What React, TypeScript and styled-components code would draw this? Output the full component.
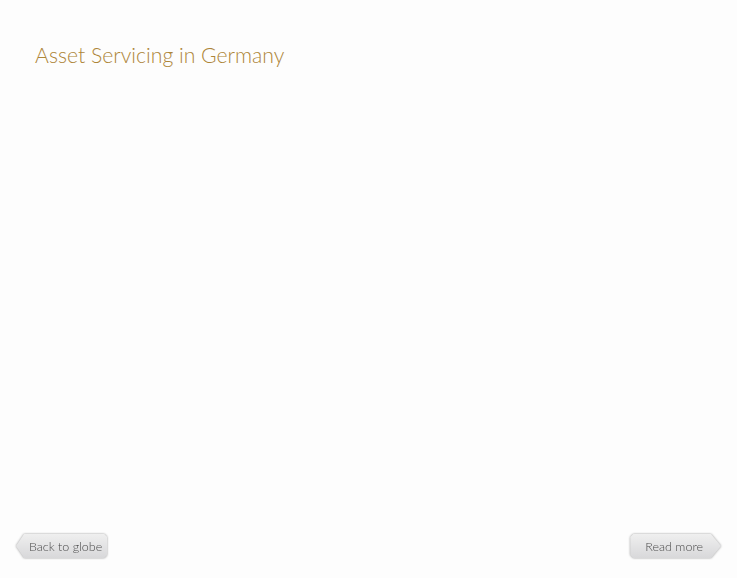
import React from "react";
import styled, { createGlobalStyle } from "styled-components";

const Global = createGlobalStyle`
  html, body { margin: 0; padding: 0; background: #fdfdfd; }
  body { font-family: Lato, "Open Sans", sans-serif; }
`;

const Page = styled.div`
  box-sizing: border-box;
  width: 737px;
  height: 578px;
  display: flex;
  flex-direction: column;
  padding: 42px 16px 20px 35px;
  background: #fdfdfd;
`;

const Title = styled.h1`
  margin: 0;
  font-family: Lato, "Open Sans", sans-serif;
  font-weight: 300;
  font-size: 21.2px;
  line-height: 26px;
  color: #ad8538;
`;

const Stage = styled.div`
  flex: 1;
`;

const Footer = styled.div`
  display: flex;
  justify-content: space-between;
  align-items: center;
  margin-left: -19px;
`;

const Outline = styled.div`
  filter: drop-shadow(0 0 0.8px rgba(0, 0, 0, 0.4));
`;

const Arrow = styled.button<{ $dir: "left" | "right" }>`
  display: flex;
  align-items: center;
  height: 24px;
  border: none;
  margin: 0;
  cursor: pointer;
  font-family: Lato, "Open Sans", sans-serif;
  font-weight: 300;
  font-size: 12.5px;
  color: #4a4a4a;
  background: linear-gradient(#efefef, #d8d8da);
  padding: ${(p) => (p.$dir === "left" ? "0 5px 0 13px" : "0 18px 0 15px")};
  clip-path: ${(p) =>
    p.$dir === "left"
      ? "polygon(8px 0, calc(100% - 3px) 0, 100% 3px, 100% calc(100% - 3px), calc(100% - 3px) 100%, 8px 100%, 0 50%)"
      : "polygon(3px 0, calc(100% - 10px) 0, 100% 50%, calc(100% - 10px) 100%, 3px 100%, 0 calc(100% - 3px), 0 3px)"};
`;

export default function App() {
  return (
    <>
      <Global />
      <Page>
        <Title>Asset Servicing in Germany</Title>
        <Stage />
        <Footer>
          <Outline>
            <Arrow $dir="left">Back to globe</Arrow>
          </Outline>
          <Outline>
            <Arrow $dir="right">Read more</Arrow>
          </Outline>
        </Footer>
      </Page>
    </>
  );
}
